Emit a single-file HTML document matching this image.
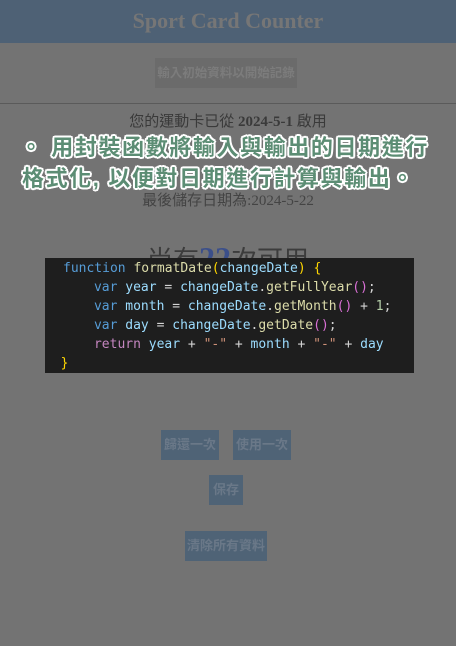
<!DOCTYPE html>
<html><head><meta charset="utf-8"><style>
body{margin:0;width:456px;height:646px;background:#737373;position:relative;overflow:hidden;font-family:"Liberation Serif","Noto Serif CJK SC",serif;}
.hdr{position:absolute;left:0;top:0;width:456px;height:43px;background:#4e6175;text-align:center;font-weight:bold;font-size:22px;line-height:42px;color:#767676}
.ab{position:absolute}
.btn{position:absolute;height:30px;line-height:30px;text-align:center;font-family:"Liberation Sans","Noto Sans CJK TC",sans-serif;font-weight:bold;font-size:13px;color:#6a7888;background:#4f6376;white-space:nowrap}
.t{position:absolute;left:0;width:456px;text-align:center;color:#3a3a3a;font-size:15px;white-space:nowrap}
.ov{position:absolute;left:20px;font-family:"Liberation Sans","Noto Sans CJK TC",sans-serif;font-weight:bold;font-size:22px;color:#5c8d74;letter-spacing:1.6px;
text-shadow:2px 0 #fff,-2px 0 #fff,0 2px #fff,0 -2px #fff,1.5px 1.5px #fff,-1.5px -1.5px #fff,1.5px -1.5px #fff,-1.5px 1.5px #fff;white-space:nowrap}
.code{position:absolute;left:45px;top:258px;width:369px;height:115px;background:#1e1e1e;font-family:"DejaVu Sans Mono","Liberation Mono",monospace;font-size:13px;line-height:19px;color:#9cdcfe;padding-top:1px;box-sizing:border-box;white-space:pre;overflow:hidden}
.k{color:#569cd6}.f{color:#dcdcaa}.y{color:#ffd700}.w{color:#d4d4d4}.r{color:#c586c0}.s{color:#ce9178}.n{color:#b5cea8}.p{color:#da70d6}
</style></head><body>
<div class="hdr">Sport Card Counter</div>
<div class="btn" style="left:155px;top:58px;width:142px;background:#6b6b6b;color:#7c7c7c;font-size:12.5px">輸入初始資料以開始記錄</div>
<div class="ab" style="left:0;top:103px;width:456px;height:1px;background:#5a5a5a"></div>
<div class="t" style="top:110px;font-family:'Liberation Serif','Noto Sans CJK TC',serif">您的運動卡已從 <b>2024-5-1</b> 啟用</div>
<div class="t" style="top:189px;color:#444;font-size:15px;font-family:'Liberation Serif','Noto Sans CJK TC',serif">最後儲存日期為:2024-5-22</div>
<div class="t" style="top:240px;font-size:26px;color:#3c3c3c;font-family:'Liberation Serif','Noto Sans CJK TC',serif">尚有<span style="color:#3b4f8a;font-size:32px;font-weight:bold">22</span>次可用</div>
<div class="code"><span style="margin-left:18px" class="k">function</span> <span class="f">formatDate</span><span class="y">(</span>changeDate<span class="y">)</span> <span class="y">{</span>
      <span class="k" style="margin-left:2px">var</span> year <span class="w">=</span> changeDate<span class="w">.</span><span class="f">getFullYear</span><span class="p">()</span><span class="w">;</span>
      <span class="k" style="margin-left:2px">var</span> month <span class="w">=</span> changeDate<span class="w">.</span><span class="f">getMonth</span><span class="p">()</span> <span class="w">+</span> <span class="n">1</span><span class="w">;</span>
      <span class="k" style="margin-left:2px">var</span> day <span class="w">=</span> changeDate<span class="w">.</span><span class="f">getDate</span><span class="p">()</span><span class="w">;</span>
      <span class="r" style="margin-left:2px">return</span> year <span class="w">+</span> <span class="s">"-"</span> <span class="w">+</span> month <span class="w">+</span> <span class="s">"-"</span> <span class="w">+</span> day
  <span class="y">}</span></div>
<div class="ov" style="top:130px">。 用封裝函數將輸入與輸出的日期進行</div>
<div class="ov" style="top:161px;left:22px">格式化, 以便對日期進行計算與輸出。</div>
<div class="btn" style="left:161px;top:430px;width:58px">歸還一次</div>
<div class="btn" style="left:233px;top:430px;width:58px">使用一次</div>
<div class="btn" style="left:209px;top:475px;width:34px">保存</div>
<div class="btn" style="left:185px;top:531px;width:82px">清除所有資料</div>
</body></html>
